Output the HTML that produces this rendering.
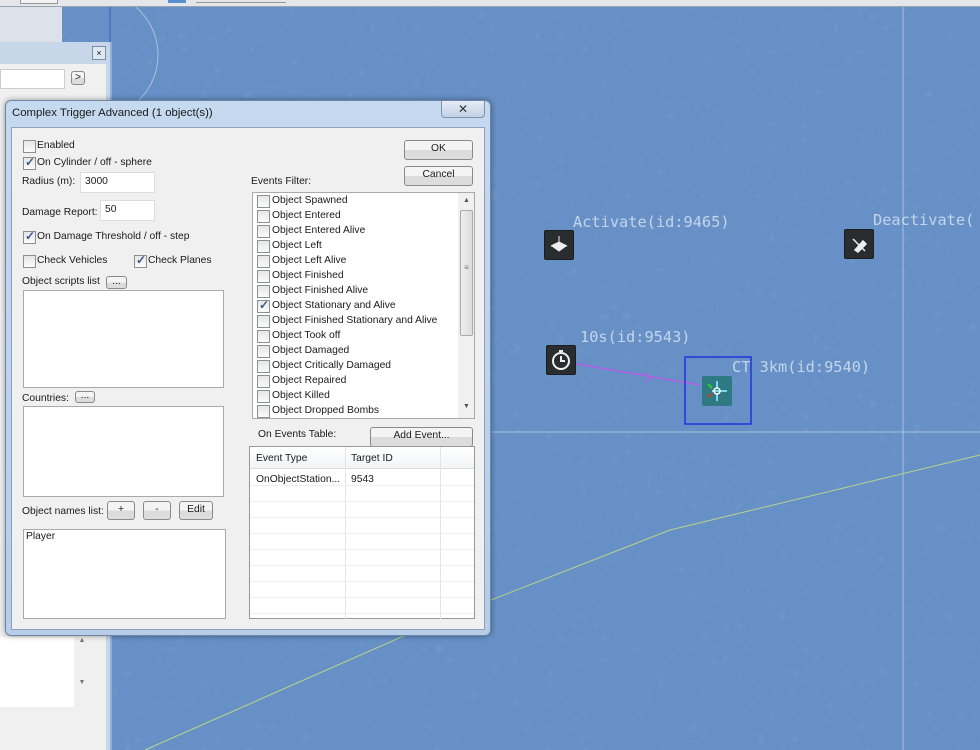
<!DOCTYPE html>
<html><head><meta charset="utf-8"><style>
*{box-sizing:border-box;margin:0;padding:0}
body{width:980px;height:750px;overflow:hidden;position:relative;background:#6690c6;font-family:"Liberation Sans",sans-serif;font-size:10.3px;color:#1a1a1a}
.a{position:absolute}
.cb{position:absolute;width:13px;height:13px;border:1px solid #8e8f8f;background:linear-gradient(#e6e6e6,#fbfbfb);}
.cb.on::after{content:"✓";position:absolute;left:1px;top:-3px;font-size:12px;color:#3b5a8a;font-weight:bold}
.t{position:absolute;white-space:nowrap;font-size:10.3px}
.btn{position:absolute;border:1px solid #8a8a8a;border-radius:3px;background:linear-gradient(#f4f4f4 50%,#dcdcdc 50%);text-align:center;font-size:10.3px;line-height:16px}
.box{position:absolute;background:#fff;border:1px solid #aaa}
.maplbl{position:absolute;color:#dbe6f3;font-family:"DejaVu Sans Mono","Liberation Mono",monospace;font-size:15.3px;white-space:nowrap;opacity:.8}
.ic{position:absolute;width:30px;height:30px;background:#2a2d30;border-radius:2px;border:1px solid #1b1d20}
.li{position:absolute;left:4px;height:15px}
.li .cb{left:0;top:1px}
.li span{position:absolute;left:15px;top:1px;white-space:nowrap}
</style></head><body>
<svg class="a" style="left:0;top:0" width="980" height="750">
<defs><filter id="n"><feTurbulence baseFrequency="0.09" numOctaves="3" seed="3"/><feColorMatrix values="0 0 0 0 0.3 0 0 0 0 0.45 0 0 0 0 0.7 0 0 0 1.2 -0.5"/></filter></defs>
<rect width="980" height="750" filter="url(#n)" opacity=".35"/>
<circle cx="95" cy="55" r="63" fill="none" stroke="#a9c2e4" stroke-width="1"/>
<line x1="110" y1="0" x2="110" y2="100" stroke="#3a5fb0" stroke-width="1"/>
<line x1="490" y1="432" x2="980" y2="432" stroke="#a8c0e0" stroke-width="1"/>
<line x1="903" y1="6" x2="903" y2="750" stroke="#a8c0e0" stroke-width="1"/>
<polyline points="145,750 440,620 670,530 980,455" fill="none" stroke="#b9d48a" stroke-width="1"/>
<line x1="565" y1="362" x2="700" y2="385" stroke="#b060e0" stroke-width="1.5"/>
<path d="M643 373 l8 5 l-6 4" fill="none" stroke="#b060e0" stroke-width="1.5"/>
<rect x="685" y="357" width="66" height="67" fill="none" stroke="#2233dd" stroke-width="1.5"/>
</svg>
<div class="a" style="left:0;top:0;width:980px;height:7px;background:#e4e6ea;border-bottom:1px solid #9aa3b0"></div>
<div class="a" style="left:20px;top:0;width:38px;height:4px;border:1px solid #999;border-top:0;background:#f2f2f2"></div>
<div class="a" style="left:168px;top:0;width:18px;height:3px;background:#5a8fd0"></div>
<div class="a" style="left:196px;top:0;width:90px;height:3px;border-bottom:1px solid #999"></div>
<div class="a" style="left:0;top:7px;width:62px;height:35px;background:#dde2ea"></div>
<div class="a" style="left:0;top:42px;width:112px;height:708px;background:#c8d6ea;border-right:2px solid #8fb0d8"></div>
<div class="a" style="left:92px;top:46px;width:14px;height:14px;border:1px solid #7b8ea8;background:#dfe7f2;font-size:9px;text-align:center;line-height:12px">×</div>
<div class="a" style="left:0;top:64px;width:106px;height:686px;background:#f0f0f0"></div>
<div class="a" style="left:0;top:69px;width:65px;height:20px;background:#fff;border:1px solid #ccc"></div>
<div class="btn" style="left:71px;top:71px;width:14px;height:14px;line-height:12px">&gt;</div>
<div class="a" style="left:0;top:637px;width:88px;height:70px;background:#fff"></div>
<div class="a" style="left:74px;top:637px;width:16px;height:70px;background:#f0f0f0;color:#777;font-size:7px;text-align:center">▲<br><br><br><br><br><br>▼</div>
<div class="maplbl" style="left:573px;top:213px">Activate(id:9465)</div>
<div class="maplbl" style="left:873px;top:211px">Deactivate(</div>
<div class="maplbl" style="left:580px;top:328px">10s(id:9543)</div>
<div class="maplbl" style="left:732px;top:358px">CT 3km(id:9540)</div>
<div class="ic" style="left:544px;top:230px"><svg width="28" height="28"><path d="M14 5v6M6 15h16l-8 -4z M7 15l7 5l7-5" fill="#eee" stroke="#eee"/></svg></div>
<div class="ic" style="left:844px;top:229px"><svg width="28" height="28"><path d="M8 9l12 12M10 20l8-9l3 3l-8 8z" fill="#eee" stroke="#eee" stroke-width="1.5"/></svg></div>
<div class="ic" style="left:546px;top:345px"><svg width="28" height="28"><circle cx="14" cy="15" r="8" fill="none" stroke="#eee" stroke-width="2"/><path d="M14 10v5h4M12 5h4" stroke="#eee" stroke-width="2" fill="none"/></svg></div>
<div class="a" style="left:702px;top:376px;width:30px;height:30px;background:#2f7a82;border-radius:2px"><svg width="30" height="30"><path d="M15 5v7M15 18v7M10 15h15" stroke="#7fd3f2" stroke-width="2"/><circle cx="15" cy="15" r="3" fill="none" stroke="#fff" stroke-width="1.5"/><path d="M6 8l4 4" stroke="#3c3" stroke-width="2"/><path d="M6 21l4-3" stroke="#d33" stroke-width="2"/></svg></div>
<div class="a" style="left:5px;top:100px;width:486px;height:536px;border-radius:6px;background:linear-gradient(#c5d9ef,#b7cde8);border:1px solid #6d86a8;box-shadow:0 0 6px rgba(0,0,0,.4)"></div>
<div class="t" style="left:12px;top:107px;font-size:11.4px">Complex Trigger Advanced (1 object(s))</div>
<div class="a" style="left:441px;top:101px;width:44px;height:17px;border:1px solid #7f93b0;border-top:0;border-radius:0 0 4px 4px;background:linear-gradient(#e4ecf6,#c2d2e6);text-align:center;font-size:12px;line-height:16px;color:#333">✕</div>
<div class="a" style="left:11px;top:127px;width:474px;height:503px;background:#f0f0f0;border:1px solid #8aa0bd"></div>
<div class="cb" style="left:23px;top:140px"></div><div class="t" style="left:37px;top:140px">Enabled</div>
<div class="cb on" style="left:23px;top:157px"></div><div class="t" style="left:37px;top:157px">On Cylinder / off - sphere</div>
<div class="t" style="left:22px;top:176px">Radius (m):</div>
<div class="box" style="left:80px;top:172px;width:75px;height:21px;border-color:#ddd"></div><div class="t" style="left:85px;top:176px">3000</div>
<div class="t" style="left:22px;top:207px">Damage Report:</div>
<div class="box" style="left:100px;top:200px;width:55px;height:21px;border-color:#ddd"></div><div class="t" style="left:105px;top:204px">50</div>
<div class="cb on" style="left:23px;top:231px"></div><div class="t" style="left:37px;top:231px">On Damage Threshold / off - step</div>
<div class="cb" style="left:23px;top:255px"></div><div class="t" style="left:37px;top:255px">Check Vehicles</div>
<div class="cb on" style="left:134px;top:255px"></div><div class="t" style="left:148px;top:255px">Check Planes</div>
<div class="t" style="left:22px;top:276px">Object scripts list</div>
<div class="btn" style="left:106px;top:276px;width:21px;height:13px;line-height:9px">...</div>
<div class="box" style="left:23px;top:290px;width:201px;height:98px"></div>
<div class="t" style="left:22px;top:393px">Countries:</div>
<div class="btn" style="left:75px;top:391px;width:20px;height:12px;line-height:8px">...</div>
<div class="box" style="left:23px;top:406px;width:201px;height:91px"></div>
<div class="t" style="left:22px;top:506px">Object names list:</div>
<div class="btn" style="left:107px;top:501px;width:28px;height:19px">+</div>
<div class="btn" style="left:143px;top:501px;width:28px;height:19px">-</div>
<div class="btn" style="left:179px;top:501px;width:34px;height:19px">Edit</div>
<div class="box" style="left:23px;top:529px;width:203px;height:90px"></div><div class="t" style="left:26px;top:531px">Player</div>
<div class="btn" style="left:404px;top:140px;width:69px;height:20px">OK</div>
<div class="btn" style="left:404px;top:166px;width:69px;height:20px">Cancel</div>
<div class="t" style="left:251px;top:176px">Events Filter:</div>
<div class="box" style="left:252px;top:192px;width:223px;height:227px;overflow:hidden">
<div class="li" style="top:1px"><div class="cb"></div><span>Object Spawned</span></div>
<div class="li" style="top:16px"><div class="cb"></div><span>Object Entered</span></div>
<div class="li" style="top:31px"><div class="cb"></div><span>Object Entered Alive</span></div>
<div class="li" style="top:46px"><div class="cb"></div><span>Object Left</span></div>
<div class="li" style="top:61px"><div class="cb"></div><span>Object Left Alive</span></div>
<div class="li" style="top:76px"><div class="cb"></div><span>Object Finished</span></div>
<div class="li" style="top:91px"><div class="cb"></div><span>Object Finished Alive</span></div>
<div class="li" style="top:106px"><div class="cb on"></div><span>Object Stationary and Alive</span></div>
<div class="li" style="top:121px"><div class="cb"></div><span>Object Finished Stationary and Alive</span></div>
<div class="li" style="top:136px"><div class="cb"></div><span>Object Took off</span></div>
<div class="li" style="top:151px"><div class="cb"></div><span>Object Damaged</span></div>
<div class="li" style="top:166px"><div class="cb"></div><span>Object Critically Damaged</span></div>
<div class="li" style="top:181px"><div class="cb"></div><span>Object Repaired</span></div>
<div class="li" style="top:196px"><div class="cb"></div><span>Object Killed</span></div>
<div class="li" style="top:211px"><div class="cb"></div><span>Object Dropped Bombs</span></div>
<div class="a" style="left:205px;top:0;width:17px;height:226px;background:#f0f0f0;color:#555;font-size:7px;text-align:center;padding-top:4px">▲</div>
<div class="a" style="left:207px;top:17px;width:13px;height:126px;border:1px solid #aaa;border-radius:2px;background:linear-gradient(90deg,#eee,#dcdcdc);font-size:8px;text-align:center;padding-top:52px;color:#777">≡</div>
<div class="a" style="left:205px;top:210px;width:17px;font-size:7px;color:#555;text-align:center">▼</div>
</div>
<div class="t" style="left:258px;top:429px">On Events Table:</div>
<div class="btn" style="left:370px;top:427px;width:103px;height:20px">Add Event...</div>
<div class="box" style="left:249px;top:446px;width:226px;height:173px;border-color:#999;background:#fff">
<div class="a" style="left:0;top:0;width:224px;height:22px;background:linear-gradient(#fff,#f2f4f6);border-bottom:1px solid #ddd"></div>
<div class="t" style="left:6px;top:6px">Event Type</div><div class="t" style="left:101px;top:6px">Target ID</div>
<div class="t" style="left:6px;top:27px">OnObjectStation...</div><div class="t" style="left:101px;top:27px">9543</div>
<div class="a" style="left:95px;top:0;width:1px;height:172px;background:#e4e4e4"></div>
<div class="a" style="left:190px;top:0;width:1px;height:172px;background:#e4e4e4"></div>
<div class="a" style="left:0;top:38px;width:224px;height:1px;background:#eee"></div>
<div class="a" style="left:0;top:54px;width:224px;height:1px;background:#eee"></div>
<div class="a" style="left:0;top:70px;width:224px;height:1px;background:#eee"></div>
<div class="a" style="left:0;top:86px;width:224px;height:1px;background:#eee"></div>
<div class="a" style="left:0;top:102px;width:224px;height:1px;background:#eee"></div>
<div class="a" style="left:0;top:118px;width:224px;height:1px;background:#eee"></div>
<div class="a" style="left:0;top:134px;width:224px;height:1px;background:#eee"></div>
<div class="a" style="left:0;top:150px;width:224px;height:1px;background:#eee"></div>
<div class="a" style="left:0;top:166px;width:224px;height:1px;background:#eee"></div>
</div>
</body></html>
